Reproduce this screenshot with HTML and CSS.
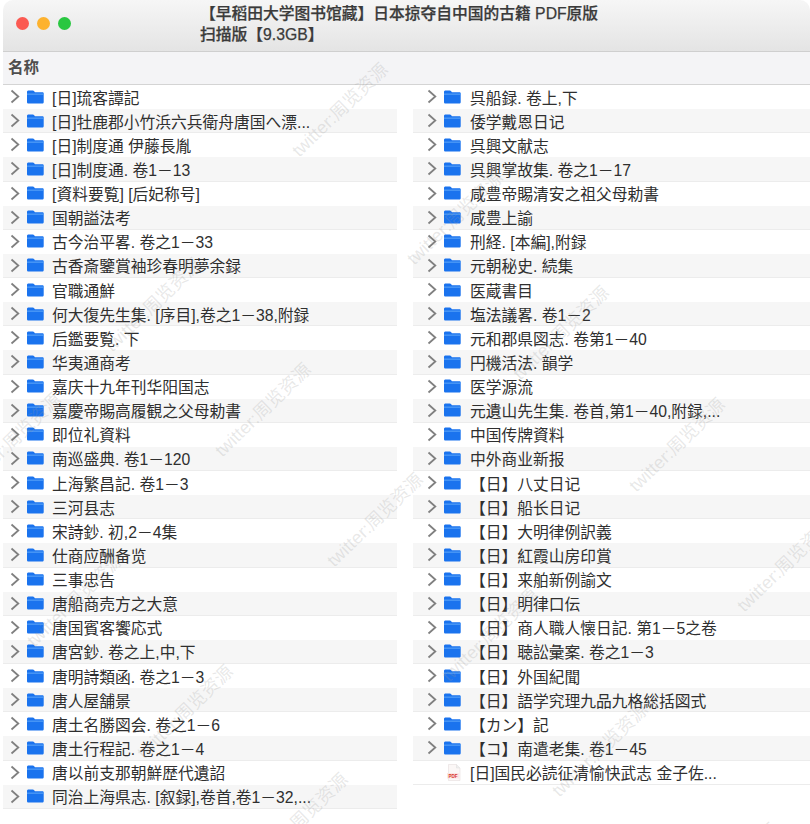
FILE: index.html
```html
<!DOCTYPE html>
<html lang="zh">
<head>
<meta charset="utf-8">
<title>Finder</title>
<link rel="stylesheet" href="styles.css">
</head>
<body>
<svg class="defs" width="0" height="0" aria-hidden="true">
  <symbol id="chev" viewBox="0 0 10 15"><path d="M1.5 1.5 8.3 7.5 1.5 13.5" fill="none" stroke="#808080" stroke-width="1.8"/></symbol>
  <symbol id="folder" viewBox="0 0 17 14"><path d="M1.6.6h4.2c.7 0 1 .2 1.4.7l.7.9h7.4c.9 0 1.4.5 1.4 1.4v8.4c0 1-.6 1.5-1.5 1.5H1.6C.6 13.5 0 13 0 12V2.1C0 1.1.6.6 1.6.6Z" fill="#1a73ee"/><path d="M0 3.6h17v1.1H0z" fill="#5aa2f8"/></symbol>
</svg>
<div class="window">
  <header class="titlebar">
    <div class="lights"><i class="light red"></i><i class="light amber"></i><i class="light green"></i></div>
    <div class="title"><span class="tl">【早稻田大学图书馆藏】日本掠夺自中国的古籍 PDF原版</span><span class="tl">扫描版【9.3GB】</span></div>
  </header>
  <div class="colhead">名称</div>
  <main class="cols">
    <ul class="list left">
      <li class="row"><svg class="chev"><use href="#chev"/></svg><svg class="folder"><use href="#folder"/></svg><span class="name">[日]琉客譚記</span></li>
      <li class="row"><svg class="chev"><use href="#chev"/></svg><svg class="folder"><use href="#folder"/></svg><span class="name">[日]牡鹿郡小竹浜六兵衛舟唐国へ漂...</span></li>
      <li class="row"><svg class="chev"><use href="#chev"/></svg><svg class="folder"><use href="#folder"/></svg><span class="name">[日]制度通 伊藤長胤</span></li>
      <li class="row"><svg class="chev"><use href="#chev"/></svg><svg class="folder"><use href="#folder"/></svg><span class="name">[日]制度通. 卷1－13</span></li>
      <li class="row"><svg class="chev"><use href="#chev"/></svg><svg class="folder"><use href="#folder"/></svg><span class="name">[資料要覧] [后妃称号]</span></li>
      <li class="row"><svg class="chev"><use href="#chev"/></svg><svg class="folder"><use href="#folder"/></svg><span class="name">国朝謚法考</span></li>
      <li class="row"><svg class="chev"><use href="#chev"/></svg><svg class="folder"><use href="#folder"/></svg><span class="name">古今治平畧. 卷之1－33</span></li>
      <li class="row"><svg class="chev"><use href="#chev"/></svg><svg class="folder"><use href="#folder"/></svg><span class="name">古香斎鑒賞袖珍春明夢余録</span></li>
      <li class="row"><svg class="chev"><use href="#chev"/></svg><svg class="folder"><use href="#folder"/></svg><span class="name">官職通鮮</span></li>
      <li class="row"><svg class="chev"><use href="#chev"/></svg><svg class="folder"><use href="#folder"/></svg><span class="name">何大復先生集. [序目],卷之1－38,附録</span></li>
      <li class="row"><svg class="chev"><use href="#chev"/></svg><svg class="folder"><use href="#folder"/></svg><span class="name">后鑑要覧. 下</span></li>
      <li class="row"><svg class="chev"><use href="#chev"/></svg><svg class="folder"><use href="#folder"/></svg><span class="name">华夷通商考</span></li>
      <li class="row"><svg class="chev"><use href="#chev"/></svg><svg class="folder"><use href="#folder"/></svg><span class="name">嘉庆十九年刊华阳国志</span></li>
      <li class="row"><svg class="chev"><use href="#chev"/></svg><svg class="folder"><use href="#folder"/></svg><span class="name">嘉慶帝賜高履観之父母勅書</span></li>
      <li class="row"><svg class="chev"><use href="#chev"/></svg><svg class="folder"><use href="#folder"/></svg><span class="name">即位礼資料</span></li>
      <li class="row"><svg class="chev"><use href="#chev"/></svg><svg class="folder"><use href="#folder"/></svg><span class="name">南巡盛典. 卷1－120</span></li>
      <li class="row"><svg class="chev"><use href="#chev"/></svg><svg class="folder"><use href="#folder"/></svg><span class="name">上海繁昌記. 卷1－3</span></li>
      <li class="row"><svg class="chev"><use href="#chev"/></svg><svg class="folder"><use href="#folder"/></svg><span class="name">三河县志</span></li>
      <li class="row"><svg class="chev"><use href="#chev"/></svg><svg class="folder"><use href="#folder"/></svg><span class="name">宋詩鈔. 初,2－4集</span></li>
      <li class="row"><svg class="chev"><use href="#chev"/></svg><svg class="folder"><use href="#folder"/></svg><span class="name">仕商应酬备览</span></li>
      <li class="row"><svg class="chev"><use href="#chev"/></svg><svg class="folder"><use href="#folder"/></svg><span class="name">三事忠告</span></li>
      <li class="row"><svg class="chev"><use href="#chev"/></svg><svg class="folder"><use href="#folder"/></svg><span class="name">唐船商売方之大意</span></li>
      <li class="row"><svg class="chev"><use href="#chev"/></svg><svg class="folder"><use href="#folder"/></svg><span class="name">唐国賓客饗応式</span></li>
      <li class="row"><svg class="chev"><use href="#chev"/></svg><svg class="folder"><use href="#folder"/></svg><span class="name">唐宮鈔. 卷之上,中,下</span></li>
      <li class="row"><svg class="chev"><use href="#chev"/></svg><svg class="folder"><use href="#folder"/></svg><span class="name">唐明詩類函. 卷之1－3</span></li>
      <li class="row"><svg class="chev"><use href="#chev"/></svg><svg class="folder"><use href="#folder"/></svg><span class="name">唐人屋舗景</span></li>
      <li class="row"><svg class="chev"><use href="#chev"/></svg><svg class="folder"><use href="#folder"/></svg><span class="name">唐土名勝図会. 卷之1－6</span></li>
      <li class="row"><svg class="chev"><use href="#chev"/></svg><svg class="folder"><use href="#folder"/></svg><span class="name">唐土行程記. 卷之1－4</span></li>
      <li class="row"><svg class="chev"><use href="#chev"/></svg><svg class="folder"><use href="#folder"/></svg><span class="name">唐以前支那朝鮮歴代遺詔</span></li>
      <li class="row"><svg class="chev"><use href="#chev"/></svg><svg class="folder"><use href="#folder"/></svg><span class="name">同治上海県志. [叙録],卷首,卷1－32,...</span></li>
    </ul>
    <ul class="list right">
      <li class="row"><svg class="chev"><use href="#chev"/></svg><svg class="folder"><use href="#folder"/></svg><span class="name">呉船録. 卷上,下</span></li>
      <li class="row"><svg class="chev"><use href="#chev"/></svg><svg class="folder"><use href="#folder"/></svg><span class="name">倭学戴恩日记</span></li>
      <li class="row"><svg class="chev"><use href="#chev"/></svg><svg class="folder"><use href="#folder"/></svg><span class="name">呉興文献志</span></li>
      <li class="row"><svg class="chev"><use href="#chev"/></svg><svg class="folder"><use href="#folder"/></svg><span class="name">呉興掌故集. 卷之1－17</span></li>
      <li class="row"><svg class="chev"><use href="#chev"/></svg><svg class="folder"><use href="#folder"/></svg><span class="name">咸豊帝賜清安之祖父母勅書</span></li>
      <li class="row"><svg class="chev"><use href="#chev"/></svg><svg class="folder"><use href="#folder"/></svg><span class="name">咸豊上諭</span></li>
      <li class="row"><svg class="chev"><use href="#chev"/></svg><svg class="folder"><use href="#folder"/></svg><span class="name">刑経. [本編],附録</span></li>
      <li class="row"><svg class="chev"><use href="#chev"/></svg><svg class="folder"><use href="#folder"/></svg><span class="name">元朝秘史. 続集</span></li>
      <li class="row"><svg class="chev"><use href="#chev"/></svg><svg class="folder"><use href="#folder"/></svg><span class="name">医蔵書目</span></li>
      <li class="row"><svg class="chev"><use href="#chev"/></svg><svg class="folder"><use href="#folder"/></svg><span class="name">塩法議畧. 卷1－2</span></li>
      <li class="row"><svg class="chev"><use href="#chev"/></svg><svg class="folder"><use href="#folder"/></svg><span class="name">元和郡県図志. 卷第1－40</span></li>
      <li class="row"><svg class="chev"><use href="#chev"/></svg><svg class="folder"><use href="#folder"/></svg><span class="name">円機活法. 韻学</span></li>
      <li class="row"><svg class="chev"><use href="#chev"/></svg><svg class="folder"><use href="#folder"/></svg><span class="name">医学源流</span></li>
      <li class="row"><svg class="chev"><use href="#chev"/></svg><svg class="folder"><use href="#folder"/></svg><span class="name">元遺山先生集. 卷首,第1－40,附録,...</span></li>
      <li class="row"><svg class="chev"><use href="#chev"/></svg><svg class="folder"><use href="#folder"/></svg><span class="name">中国传牌資料</span></li>
      <li class="row"><svg class="chev"><use href="#chev"/></svg><svg class="folder"><use href="#folder"/></svg><span class="name">中外商业新报</span></li>
      <li class="row"><svg class="chev"><use href="#chev"/></svg><svg class="folder"><use href="#folder"/></svg><span class="name">【日】八丈日记</span></li>
      <li class="row"><svg class="chev"><use href="#chev"/></svg><svg class="folder"><use href="#folder"/></svg><span class="name">【日】船长日记</span></li>
      <li class="row"><svg class="chev"><use href="#chev"/></svg><svg class="folder"><use href="#folder"/></svg><span class="name">【日】大明律例訳義</span></li>
      <li class="row"><svg class="chev"><use href="#chev"/></svg><svg class="folder"><use href="#folder"/></svg><span class="name">【日】紅霞山房印賞</span></li>
      <li class="row"><svg class="chev"><use href="#chev"/></svg><svg class="folder"><use href="#folder"/></svg><span class="name">【日】来舶新例諭文</span></li>
      <li class="row"><svg class="chev"><use href="#chev"/></svg><svg class="folder"><use href="#folder"/></svg><span class="name">【日】明律口伝</span></li>
      <li class="row"><svg class="chev"><use href="#chev"/></svg><svg class="folder"><use href="#folder"/></svg><span class="name">【日】商人職人懐日記. 第1－5之卷</span></li>
      <li class="row"><svg class="chev"><use href="#chev"/></svg><svg class="folder"><use href="#folder"/></svg><span class="name">【日】聴訟彙案. 卷之1－3</span></li>
      <li class="row"><svg class="chev"><use href="#chev"/></svg><svg class="folder"><use href="#folder"/></svg><span class="name">【日】外国紀聞</span></li>
      <li class="row"><svg class="chev"><use href="#chev"/></svg><svg class="folder"><use href="#folder"/></svg><span class="name">【日】語学究理九品九格総括図式</span></li>
      <li class="row"><svg class="chev"><use href="#chev"/></svg><svg class="folder"><use href="#folder"/></svg><span class="name">【カン】記</span></li>
      <li class="row"><svg class="chev"><use href="#chev"/></svg><svg class="folder"><use href="#folder"/></svg><span class="name">【コ】南遣老集. 卷1－45</span></li>
      <li class="row file"><svg class="pdf" viewBox="0 0 14 17"><path d="M1.5.5h8l3.5 3.5v12.5h-11.5z" fill="#fbf7f6" stroke="#e6dedd" stroke-width=".6"/><path d="M9.5.5V4H13" fill="#eee" stroke="#ddd" stroke-width=".5"/><rect x="0" y="9" width="12" height="5.5" fill="#fbe6e4"/><text x="6" y="13.6" class="pdftext">PDF</text></svg><span class="name">[日]国民必読征清愉快武志 金子佐...</span></li>
    </ul>
  </main>
</div>
<div class="marks" aria-hidden="true">
  <span class="wm w1">twitter:周览资源</span>
  <span class="wm w2">twitter:周览资源</span>
  <span class="wm w3">twitter:周览资源</span>
  <span class="wm w4">twitter:周览资源</span>
  <span class="wm w5">twitter:周览资源</span>
  <span class="wm w6">twitter:周览资源</span>
  <span class="wm w7">twitter:周览资源</span>
  <span class="wm w8">twitter:周览资源</span>
  <span class="wm w9">twitter:周览资源</span>
  <span class="wm w10">twitter:周览资源</span>
  <span class="wm w11">twitter:周览资源</span>
  <span class="wm w12">twitter:周览资源</span>
  <span class="wm w13">twitter:周览资源</span>
  <span class="wm w14">twitter:周览资源</span>
  <span class="wm w15">twitter:周览资源</span>
</div>
</body>
</html>
```
FILE: styles.css
```css
* { box-sizing: border-box; }
html, body { margin: 0; padding: 0; height: 824px; overflow: hidden; background: #fff; }
body {
  position: relative;
  font-family: "Liberation Sans", "Noto Sans CJK SC", sans-serif;
  color: #2c2c2c;
}
.defs { position: absolute; }
.window { padding-left: 3px; }
.titlebar {
  height: 52px;
  display: flex;
  background: linear-gradient(#f6f6f6, #e4e4e4);
  border-bottom: 1px solid #cfcfcf;
  border-radius: 10px 10px 0 0;
}
.lights { display: flex; gap: 8px; padding: 17px 0 0 13px; width: 197px; }
.light { width: 13px; height: 13px; border-radius: 50%; }
.red { background: #fb5a52; }
.amber { background: #fdb22e; }
.green { background: #29c740; }
.title { padding-top: 3px; font-size: 15.75px; font-weight: 500; line-height: 21px; color: #3a3a3a; -webkit-text-stroke: .25px #3a3a3a; }
.tl { display: block; white-space: nowrap; }
.colhead {
  height: 33px;
  padding: 6px 0 0 5px;
  background: #f4f4f6;
  border-bottom: 1px solid #d4d4d4;
  font-size: 15.5px;
  line-height: 20px;
  font-weight: 700;
  color: #4e4e4e;
}
.cols { display: flex; gap: 16px; }
.list { list-style: none; margin: 0; padding: 0; flex: none; }
.left { width: 394px; }
.right { width: 397px; }
.row {
  height: 24.14px;
  display: flex;
  align-items: center;
  border-bottom: 1px solid transparent;
  white-space: nowrap;
}
.left .row { padding-left: 7px; }
.right .row { padding-left: 14px; }
.right .name { margin-left: 1px; }
.row:nth-child(even) { background: #f6f6f6; border-bottom-color: #ececec; }
.row.file { border-bottom-color: #ececec; }
.chev { width: 10px; height: 15px; margin-right: 7px; flex: none; }
.folder { width: 17px; height: 14px; margin-right: 8px; flex: none; }
.file .pdf { width: 14px; height: 17px; margin: 0 8px 0 20px; flex: none; }
.pdftext { font: 700 4.6px "Liberation Sans", sans-serif; fill: #d8352c; text-anchor: middle; }
.name { font-size: 15.75px; line-height: 20px; padding-top: 4px; color: #2f2f2f; }
.marks { position: absolute; inset: 0; overflow: hidden; pointer-events: none; }
.wm {
  position: absolute;
  width: 150px;
  font-size: 18px;
  line-height: 20px;
  color: rgba(150,150,150,.22);
  white-space: nowrap;
  text-align: center;
  transform: rotate(-44deg);
}
.w1 { left: 265px; top: 100px; }
.w2 { left: 380px; top: 208px; }
.w3 { left: 486px; top: 323px; }
.w4 { left: 602px; top: 435px; }
.w5 { left: 710px; top: 555px; }
.w6 { left: 188px; top: 400px; }
.w7 { left: 300px; top: 510px; }
.w8 { left: 415px; top: 625px; }
.w9 { left: 525px; top: 740px; }
.w10 { left: 78px; top: 295px; }
.w11 { left: 0; top: 590px; }
.w12 { left: 110px; top: 702px; }
.w13 { left: 225px; top: 810px; }
.w14 { left: 655px; top: 860px; }
.w15 { left: -62px; top: 430px; }
```
